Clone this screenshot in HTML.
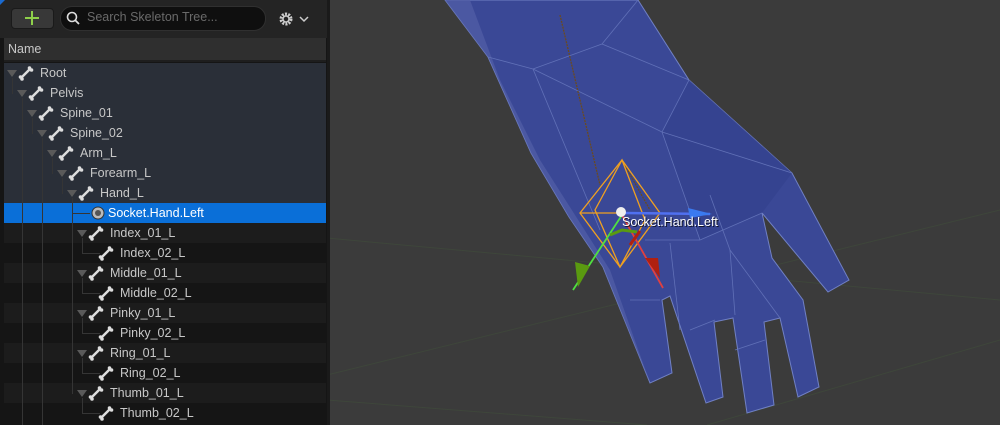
<!DOCTYPE html>
<html><head><meta charset="utf-8"><style>
*{margin:0;padding:0;box-sizing:border-box}
body{width:1000px;height:425px;overflow:hidden;background:#3a3a3a;font-family:"Liberation Sans",sans-serif;position:relative}
#panel{position:absolute;left:0;top:0;width:327px;height:425px;background:#151515}
#top{position:absolute;left:0;top:0;width:327px;height:38px;background:#242424}
.row{position:absolute;left:4px;width:322px;height:20px;font-size:12.5px;color:#c8c8c8;line-height:20px}
.row span{position:absolute}
.arr{position:absolute;width:0;height:0;border-left:5px solid transparent;border-right:5px solid transparent;border-top:7px solid #5a5a5a;top:7px}
.bone{position:absolute;top:2px}
.vl{position:absolute;width:1px;background:#353535}
.hl{position:absolute;height:1px;background:#353535}
</style></head><body>
<svg style="position:absolute;left:327px;top:0" width="673" height="425">
<rect width="673" height="425" fill="#3b3b3b"/>
<g stroke="#3e463b" stroke-width="1" fill="none">
<line x1="0" y1="238" x2="673" y2="300"/><line x1="0" y1="375" x2="673" y2="210"/><line x1="0" y1="400" x2="320" y2="425"/><line x1="380" y1="425" x2="673" y2="340"/>
</g>
<g transform="translate(-327,0)">
<polygon points="445,0 488,57 531,153 569,217 603,267 650,383 672,373 662,300 670,296 706,403 723,397 714,322 733,318 747,413 774,405 764,322 780,318 798,397 819,387 803,300 772,258 762,213 828,292 849,280 792,173 689,80 638,0" fill="#3a4896" stroke="#7080c4" stroke-width="1"/>
<polygon points="445,0 488,57 531,153 569,217 603,267 650,383 610,270 575,215 540,160 500,80 470,0" fill="#5260a6" opacity="0.7"/>
<polygon points="689,80 792,173 762,213 700,240 662,132" fill="#34428f" opacity="0.8"/>
<g stroke="#6575bb" stroke-width="0.8" fill="none" opacity="0.9">
<line x1="488" y1="57" x2="533" y2="69"/><line x1="533" y1="69" x2="602" y2="44"/><line x1="602" y1="44" x2="638" y2="0"/>
<line x1="533" y1="69" x2="662" y2="132"/><line x1="602" y1="44" x2="689" y2="80"/><line x1="662" y1="132" x2="689" y2="80"/>
<line x1="662" y1="132" x2="792" y2="173"/><line x1="662" y1="132" x2="700" y2="240"/><line x1="700" y1="240" x2="762" y2="213"/>
<line x1="700" y1="240" x2="645" y2="240"/><line x1="533" y1="69" x2="600" y2="230"/><line x1="710" y1="195" x2="730" y2="250"/>
<line x1="670" y1="243" x2="680" y2="330"/><line x1="730" y1="250" x2="735" y2="315"/><line x1="730" y1="250" x2="780" y2="318"/>
<line x1="630" y1="300" x2="660" y2="300"/><line x1="690" y1="330" x2="715" y2="320"/><line x1="735" y1="350" x2="765" y2="340"/>
</g>
<g fill="none" stroke-width="1.3">
<line x1="560" y1="15" x2="600" y2="185" stroke="#6a4a20" stroke-dasharray="2,1"/>
<line x1="622" y1="160" x2="650" y2="210" stroke="#6a4a20" stroke-dasharray="2,1"/>
<polygon points="622,160 660,213 620,267 580,213" stroke="#f0a020"/>
<polygon points="622,160 645,220 620,267 595,210" stroke="#f0a020"/>
<line x1="580" y1="213" x2="660" y2="213" stroke="#f0a020"/>
</g>
<line x1="622" y1="213" x2="710" y2="214" stroke="#5070f0" stroke-width="2.5"/>
<polygon points="688,208 712,214 690,218" fill="#3a7af0"/>
<line x1="622" y1="215" x2="573" y2="290" stroke="#50e040" stroke-width="1.8"/>
<polygon points="575,262 590,266 578,287" fill="#5a9a10"/>
<line x1="622" y1="215" x2="663" y2="288" stroke="#e04040" stroke-width="1.8"/>
<polygon points="645,258 658,258 660,278" fill="#b02010"/>
<polyline points="610,235 622,230 637,232" stroke="#5a9a10" stroke-width="3" fill="none"/>
<line x1="630" y1="245" x2="640" y2="231" stroke="#b02010" stroke-width="3"/>
<circle cx="621" cy="212" r="5" fill="#eee"/>
<text x="623" y="227" font-family="Liberation Sans" font-size="12.5" fill="#000" opacity="0.7">Socket.Hand.Left</text>
<text x="622" y="226" font-family="Liberation Sans" font-size="12.5" fill="#fff">Socket.Hand.Left</text>
</g>
</svg>
<div style="position:absolute;left:327px;top:0;width:3px;height:425px;background:#1a1a1a"></div>
<div id="panel">
<div id="top"></div>
<div style="position:absolute;left:0;top:0;width:0;height:0;border-top:5px solid #1a6ad0;border-right:5px solid transparent"></div>
<div style="position:absolute;left:11px;top:8px;width:43px;height:21px;background:#383838;border:1px solid #1a1a1a;border-radius:4px"></div>
<div style="position:absolute;left:25px;top:17px;width:14px;height:2px;background:#8ed04a"></div>
<div style="position:absolute;left:31px;top:11px;width:2px;height:14px;background:#8ed04a"></div>
<div style="position:absolute;left:60px;top:6px;width:206px;height:25px;background:#0f0f0f;border:1px solid #303030;border-radius:12px"></div>
<svg style="position:absolute;left:66px;top:11px" width="14" height="14"><circle cx="6" cy="6" r="4.5" stroke="#ddd" stroke-width="1.6" fill="none"/><line x1="9.5" y1="9.5" x2="13" y2="13" stroke="#ddd" stroke-width="1.8"/></svg>
<div style="position:absolute;left:87px;top:10px;font-size:12.5px;color:#6a6a6a">Search Skeleton Tree...</div>
<svg style="position:absolute;left:278px;top:11px" width="32" height="16"><circle cx="8" cy="8" r="5" fill="none" stroke="#ccc" stroke-width="3" stroke-dasharray="2,1.2"/><circle cx="8" cy="8" r="3" fill="none" stroke="#ccc" stroke-width="1.5"/><polyline points="22,6 26,10 30,6" stroke="#ccc" stroke-width="1.5" fill="none"/></svg>
<div style="position:absolute;left:4px;top:38px;width:322px;height:24px;background:#2f2f2f;border-bottom:2px solid #1e1e1e;font-size:12.5px;color:#c8c8c8;line-height:22px;padding-left:4px">Name</div>
<div style="position:absolute;left:4px;top:63px;width:322px;height:140px;background:#2a2f38"></div>
<div style="position:absolute;left:4px;top:203px;width:322px;height:20px;background:#0a6fd8"></div>
<div style="position:absolute;left:4px;top:223px;width:322px;height:20px;background:#1c1c1c"></div>
<div style="position:absolute;left:4px;top:263px;width:322px;height:20px;background:#1c1c1c"></div>
<div style="position:absolute;left:4px;top:303px;width:322px;height:20px;background:#1c1c1c"></div>
<div style="position:absolute;left:4px;top:343px;width:322px;height:20px;background:#1c1c1c"></div>
<div style="position:absolute;left:4px;top:383px;width:322px;height:20px;background:#1c1c1c"></div>
<div class="vl" style="left:12px;top:78px;height:16px"></div>
<div class="vl" style="left:22px;top:98px;height:327px"></div>
<div class="vl" style="left:32px;top:118px;height:16px"></div>
<div class="vl" style="left:42px;top:138px;height:287px"></div>
<div class="vl" style="left:52px;top:158px;height:16px"></div>
<div class="vl" style="left:62px;top:178px;height:16px"></div>
<div class="vl" style="left:72px;top:198px;height:196px"></div>
<div class="vl" style="left:82px;top:238px;height:16px"></div>
<div class="vl" style="left:82px;top:278px;height:16px"></div>
<div class="vl" style="left:82px;top:318px;height:16px"></div>
<div class="vl" style="left:82px;top:358px;height:16px"></div>
<div class="vl" style="left:82px;top:398px;height:16px"></div>
<div class="hl" style="left:72px;top:213px;width:18px"></div>
<div class="hl" style="left:82px;top:253px;width:18px"></div>
<div class="hl" style="left:82px;top:293px;width:18px"></div>
<div class="hl" style="left:82px;top:333px;width:18px"></div>
<div class="hl" style="left:82px;top:373px;width:18px"></div>
<div class="hl" style="left:82px;top:413px;width:18px"></div>
<svg width="0" height="0" style="position:absolute"><defs><g id="b"><path d="M3,13 L12,4" stroke="#ddd" stroke-width="2.5"/><circle cx="2.5" cy="12" r="1.8" fill="#ddd"/><circle cx="4" cy="14" r="1.8" fill="#ddd"/><circle cx="11.5" cy="3" r="1.8" fill="#ddd"/><circle cx="13.5" cy="5" r="1.8" fill="#ddd"/></g></defs></svg>
<div id="rows"></div>
<script>
var R=[["Root",0,1],["Pelvis",1,1],["Spine_01",2,1],["Spine_02",3,1],["Arm_L",4,1],["Forearm_L",5,1],["Hand_L",6,1],["Socket.Hand.Left",7,2],["Index_01_L",7,1],["Index_02_L",8,0],["Middle_01_L",7,1],["Middle_02_L",8,0],["Pinky_01_L",7,1],["Pinky_02_L",8,0],["Ring_01_L",7,1],["Ring_02_L",8,0],["Thumb_01_L",7,1],["Thumb_02_L",8,0]];
var h="";R.forEach(function(r,i){var y=63+i*20,L=r[1],x=10*L;
h+='<div class="row" style="top:'+y+'px">';
if(r[2]==1)h+='<div class="arr" style="left:'+(3+x)+'px"></div>';
if(r[2]==2)h+='<svg class="bone" style="left:'+(86)+'px" width="16" height="16"><circle cx="8" cy="8" r="6" fill="#bbb" stroke="#333"/><circle cx="8" cy="8" r="3" fill="#555"/></svg>';
else h+='<svg class="bone" style="left:'+(14+x)+'px" width="16" height="16"><use href="#b"/></svg>';
h+='<span style="left:'+(36+x-(r[2]==2?2:0))+'px;'+(r[2]==2?'color:#fff':'')+'">'+r[0]+'</span></div>';});
document.getElementById("rows").innerHTML=h;
</script>
</div>
</body></html>
